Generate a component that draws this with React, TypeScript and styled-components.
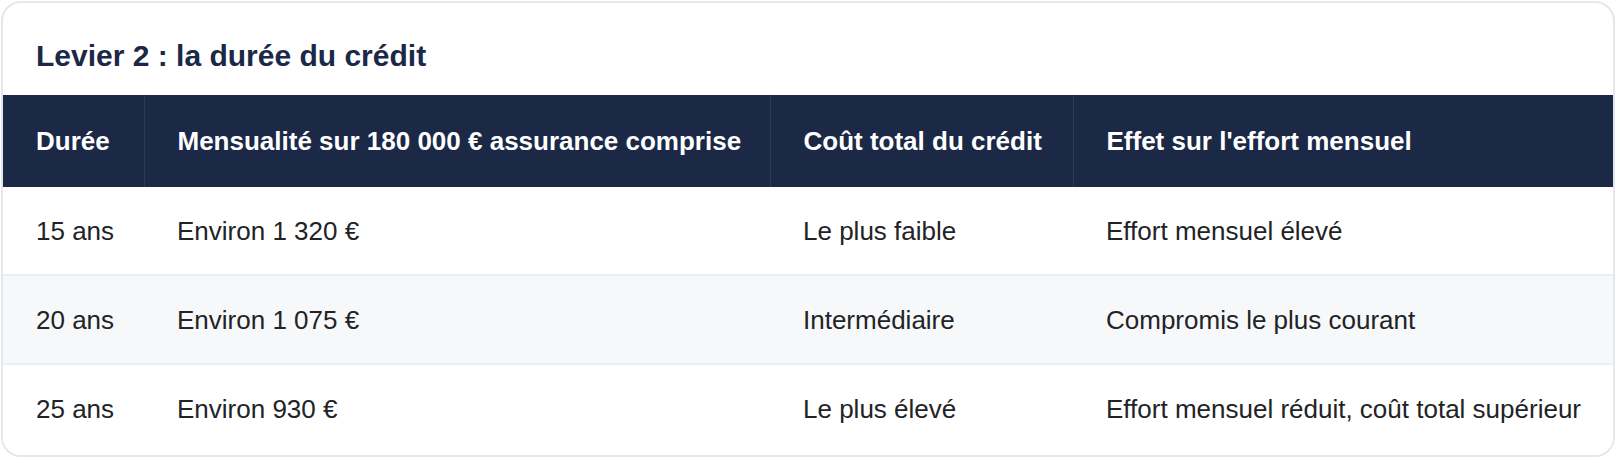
import React from 'react'
import styled, { createGlobalStyle } from 'styled-components'

interface Row {
	duree: string
	mensualite: string
	cout: string
	effet: string
}

interface BodyRowProp {
	readonly striped?: boolean
}

const rows: Row[] = [
	{
		duree: '15 ans',
		mensualite: 'Environ 1 320 €',
		cout: 'Le plus faible',
		effet: 'Effort mensuel élevé',
	},
	{
		duree: '20 ans',
		mensualite: 'Environ 1 075 €',
		cout: 'Intermédiaire',
		effet: 'Compromis le plus courant',
	},
	{
		duree: '25 ans',
		mensualite: 'Environ 930 €',
		cout: 'Le plus élevé',
		effet: 'Effort mensuel réduit, coût total supérieur',
	},
]

const App: React.FC = () => {
	return (
		<>
			<GlobalStyle />
			<Page>
				<Card>
					<Title>Levier 2 : la durée du crédit</Title>
					<Table>
						<colgroup>
							<col style={{ width: 141 }} />
							<col style={{ width: 626 }} />
							<col style={{ width: 303 }} />
							<col />
						</colgroup>
						<thead>
							<tr>
								<HeadCell>Durée</HeadCell>
								<HeadCell>Mensualité sur 180 000 € assurance comprise</HeadCell>
								<HeadCell>Coût total du crédit</HeadCell>
								<HeadCell>Effet sur l'effort mensuel</HeadCell>
							</tr>
						</thead>
						<tbody>
							{rows.map((row, i) => (
								<BodyRow key={row.duree} striped={i % 2 === 1}>
									<Cell>{row.duree}</Cell>
									<Cell>{row.mensualite}</Cell>
									<Cell>{row.cout}</Cell>
									<Cell>{row.effet}</Cell>
								</BodyRow>
							))}
						</tbody>
					</Table>
				</Card>
			</Page>
		</>
	)
}

export default App

const GlobalStyle = createGlobalStyle`
	body {
		margin: 0;
		background: #ffffff;
		font-family: "Liberation Sans", Arial, Helvetica, sans-serif;
	}
`

const Page = styled.div`
	padding: 1px 1px 0 1px;
`

const Card = styled.div`
	border: 2px solid #e4e7eb;
	border-radius: 20px;
	overflow: hidden;
	background: #ffffff;
`

const Title = styled.h2`
	margin: 0;
	padding: 35px 33px 22px;
	font-size: 30px;
	line-height: 35px;
	font-weight: 700;
	color: #1b2847;
`

const Table = styled.table`
	width: 100%;
	border-collapse: collapse;
	table-layout: fixed;
	font-size: 26px;
`

const HeadCell = styled.th`
	background: #1b2846;
	color: #ffffff;
	font-weight: 700;
	text-align: left;
	white-space: nowrap;
	padding: 29px 33px;
	line-height: 34px;
	border-left: 1px solid #2c3a58;

	&:first-child {
		border-left: none;
	}
`

const BodyRow = styled.tr<BodyRowProp>`
	background: ${({ striped }) => (striped ? '#f7f8fa' : '#ffffff')};
	border-top: 2px solid #eceef2;

	&:first-child {
		border-top: none;
	}

	&:last-child td {
		padding-bottom: 29px;
	}
`

const Cell = styled.td`
	padding: 28px 33px 26px;
	line-height: 33px;
	color: #222326;
	white-space: nowrap;
`
